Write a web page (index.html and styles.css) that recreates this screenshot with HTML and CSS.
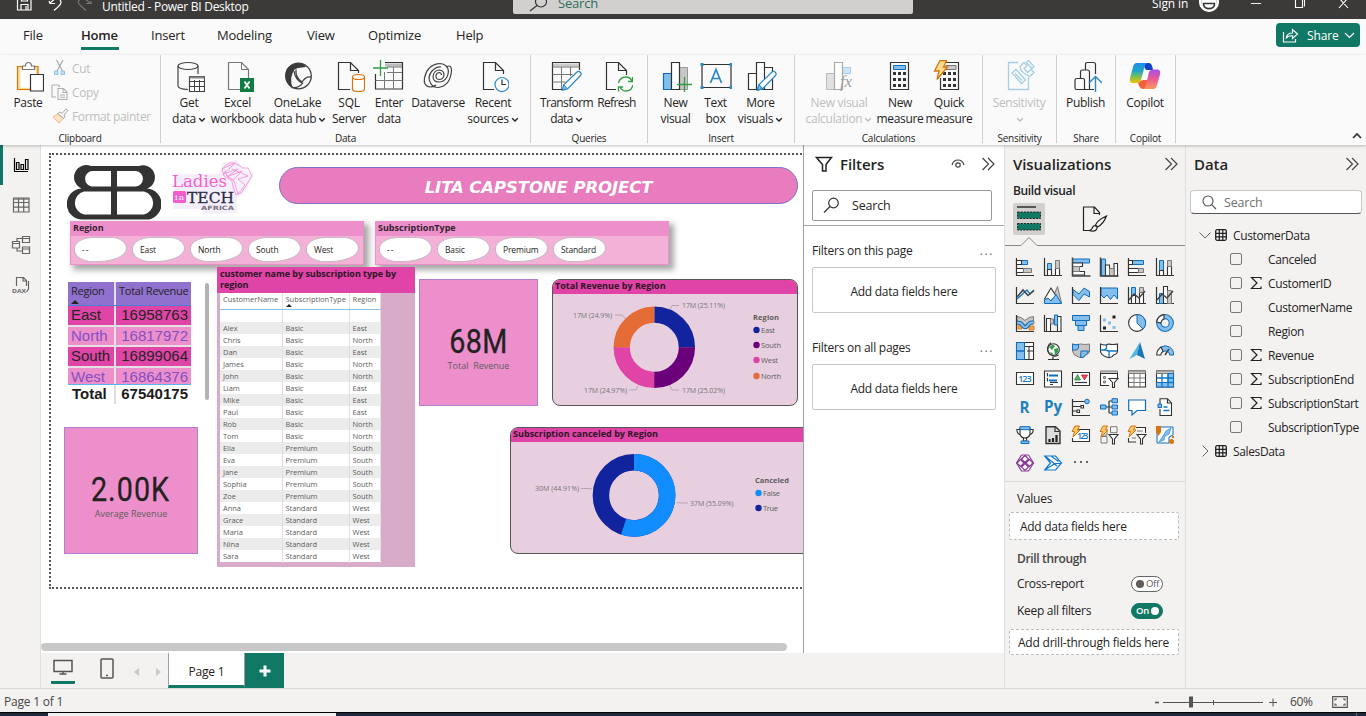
FILE: index.html
```html
<!DOCTYPE html>
<html lang="en">
<head>
<meta charset="utf-8">
<title>Untitled - Power BI Desktop</title>
<link rel="stylesheet" href="styles.css">
</head>
<body>
<svg class="defs" width="0" height="0">
  <defs>
    <linearGradient id="cpA" x1="0" y1="0" x2="0" y2="1"><stop offset="0" stop-color="#1c8fe8"/><stop offset=".4" stop-color="#1fa6c9"/><stop offset=".7" stop-color="#7fbf4d"/><stop offset="1" stop-color="#f5c400"/></linearGradient>
    <linearGradient id="cpB" x1="0" y1="0" x2="0" y2="1"><stop offset="0" stop-color="#a450e8"/><stop offset=".5" stop-color="#ec5a90"/><stop offset="1" stop-color="#fb9a5a"/></linearGradient>
    <symbol id="chev" viewBox="0 0 8 6"><path d="M1.2 1.2 4 4 6.8 1.2" fill="none" stroke="currentColor" stroke-width="1.4"/></symbol>
    <symbol id="dbl" viewBox="0 0 14 14"><path d="M1.5 1 7.5 7l-6 6M7 1l6 6-6 6" fill="none" stroke="#444" stroke-width="1.2"/></symbol>
    <symbol id="tbl" viewBox="0 0 12 12"><rect x=".7" y=".7" width="10.6" height="10.6" rx="1.5" fill="none" stroke="#222" stroke-width="1.3"/><path d="M4.3 1v10M7.8 1v10M1 4.3h10M1 7.8h10" stroke="#222" stroke-width="1.2"/></symbol>
    <symbol id="sig" viewBox="0 0 12 14"><path d="M11 3.5V1.5H1.5L7 7l-5.5 5.5H11v-2" fill="none" stroke="#222" stroke-width="1.2"/></symbol>
    <symbol id="pen" viewBox="0 0 22 22"><path d="M1.5 20.5 3 15 16.5 1.8a2.6 2.6 0 0 1 3.7 3.7L7 19z" fill="#fff" stroke="#2b88c8" stroke-width="1.3"/><path d="M1.5 20.5 3 15l4 4z" fill="#83beec" stroke="#2b88c8"/></symbol>
  </defs>
</svg>

<header class="titlebar">
  <svg class="tb-left" width="102" height="19" viewBox="0 0 102 19" fill="none" stroke="#fff" stroke-width="1.2"><path d="M17.500-2V10h13.500V-2M21 10V4.500h7V10M21.500-2V1h6v-3M26 6v4"/><path d="M49 1l1 2.500h5M50 3l6-5M58-2q6 4 0 9l-4 3.500"/><path d="M91 1v2.500h-5M90 3l-6-5M82-2q-7 4-1 8l5 4.500" stroke="#777"/></svg>
  <span class="tb-title">Untitled - Power BI Desktop</span>
  <div class="tb-search"><svg width="22" height="14" viewBox="0 0 22 14" fill="none" stroke="#333" stroke-width="1.2"><circle cx="14" cy="1.500" r="5.500"/><path d="M10 5.500 3 11"/></svg><span>Search</span></div>
  <span class="tb-sign">Sign in</span>
  <svg class="tb-right" width="172" height="19" viewBox="0 0 172 19" fill="none" stroke="#fff" stroke-width="1.100"><circle cx="15" cy="2" r="9.500" fill="#fff"/><circle cx="15" cy="2" r="7.500" fill="#3b3a39" stroke="none"/><circle cx="15" cy="2" r="7" fill="#fff"/><path d="M9.500 3.500q0 5 5.500 5t5.500-5z" stroke="#333" stroke-width="1.500"/><path d="M57 3.500h10M101.500-1V7.500h7V-1zM104-1.500h6.500V6.500M145-2l9 10M154-2l-9 10"/></svg>
</header>

<nav class="tabs">
  <span>File</span><span class="on"><b>Home</b></span><span>Insert</span><span>Modeling</span><span>View</span><span>Optimize</span><span>Help</span>
  <div class="share"><svg width="17" height="15" viewBox="0 0 17 15" fill="none" stroke="#fff" stroke-width="1.200"><path d="M1.500 4v10h12v-3"/><path d="M4 10.500Q5 5 10.500 5V1.500L15.500 6l-5 4.500V7.800Q6 7.500 4 10.500z"/></svg><span>Share</span><svg width="11" height="7" viewBox="0 0 11 7" fill="none" stroke="#fff" stroke-width="1.200"><path d="M1 1l4.500 4.500L10 1"/></svg></div>
</nav>

<section class="ribbon">
  <div class="group g-clip">
    <div class="cells">
      <div class="cell w-paste"><svg width="32" height="32" viewBox="0 0 32 32" fill="none"><path d="M7 8h18v21H7z" fill="#fff" stroke="#f8dc94" stroke-width="2.500"/><path d="M19 29.500H5.500v-23H26V14" stroke="#d9730d" stroke-width="1.200"/><path d="M10.500 9.500V6h3q0-3.500 3-3.500t3 3.500h3v3.500z" fill="#fff" stroke="#777" stroke-width="1.200"/><path d="M18.500 14.500h13v16.500h-13z" fill="#fff" stroke="#333" stroke-width="1.200"/></svg><p>Paste</p></div>
      <ul class="clip">
        <li><svg width="18" height="18" viewBox="0 0 18 18" fill="none"><path d="M5.500 1l6 11M12 1 6 12" stroke="#aaa" stroke-width="1.200"/><path d="M3.500 12h3.500v3.500H3.500zM10 12h3.500v3.500H10z" fill="#c7e0f4" stroke="#8fc3e8"/></svg>Cut</li>
        <li><svg width="18" height="18" viewBox="0 0 18 18" fill="none" stroke="#b0b0b0" stroke-width="1.100"><path d="M5 14H1V2h6l2 2M7 5.500h5.500L16 9v7.500H7zM12 6v3.500h4M9 12h5M9 14.300h5"/></svg>Copy</li>
        <li><svg width="18" height="18" viewBox="0 0 18 18" fill="none"><path d="M2 10l5-3.500 5 5L8 16z" fill="#fde3c4" stroke="#e9b98b"/><path d="M7 6.500l2-1.500 2 1.500 4-4.500 1.800 1.500-3.800 4.500 1 2-2 1.500z" stroke="#aaa"/></svg>Format painter</li>
      </ul>
    </div>
    <h6>Clipboard</h6>
  </div>

  <div class="group g-data">
    <div class="cells">
      <div class="cell w42"><svg width="32" height="32" viewBox="0 0 32 32" fill="none" stroke="#444" stroke-width="1.200"><ellipse cx="15" cy="6" rx="10" ry="3.500"/><path d="M5 6v20q0 3 10 3.500M25 6v8"/><path d="M16.500 16.500h15v15h-15z" fill="#fff"/><path d="M16.500 17.500h15" stroke="#888" stroke-width="2"/><path d="M16.500 21.500h15M16.500 26.500h15M21.500 20v11M26.500 20v11" stroke-width="1"/></svg><p>Get<br>data<svg class="cv"><use href="#chev"/></svg></p></div>
      <div class="cell w55"><svg width="32" height="32" viewBox="0 0 32 32" fill="none"><path d="M18 29.500H6.500v-27h13l7 7V18" stroke="#777" stroke-width="1.200"/><path d="M19.500 2.500v7h7" stroke="#777"/><path d="M18 18h14v14H18z" fill="#107c41"/><path d="M22.500 21.500l5 7M27.500 21.500l-5 7" stroke="#fff" stroke-width="1.800"/></svg><p>Excel<br>workbook</p></div>
      <div class="cell w65"><svg width="32" height="32" viewBox="0 0 32 32" fill="none"><circle cx="16.500" cy="16" r="12.800" stroke="#444" stroke-width="1.300"/><path d="M16 3Q3 5 3.500 16q.5 8 7 12Q7 17 12.500 9.500L16 8l8-1q-2-4-8-4z" fill="#3b3b3b"/><path d="M12 11q1 9 9 12.500M14 9.500q-1 8 6 12.500 4-6 9-5M9.500 27.500q8 1 11.500-5" stroke="#444" stroke-width="1.300"/></svg><p>OneLake<br>data hub<svg class="cv"><use href="#chev"/></svg></p></div>
      <div class="cell w38"><svg width="32" height="32" viewBox="0 0 32 32" fill="none"><path d="M17 29.500H5.500v-27h12l8 8V13M17.500 2.500v8h8" stroke="#333" stroke-width="1.200"/><path d="M19.500 17v12q0 2.500 6 2.500t6-2.500V17" fill="#fff" stroke="#d9730d" stroke-width="1.200"/><ellipse cx="25.500" cy="17" rx="6" ry="2.500" fill="#fff" stroke="#d9730d" stroke-width="1.200"/></svg><p>SQL<br>Server</p></div>
      <div class="cell w42"><svg width="32" height="32" viewBox="0 0 32 32" fill="none"><path d="M12 3.500h18v3H12z" fill="#bbb"/><path d="M12 2.500h17.500v26.500h-27V14" stroke="#333" stroke-width="1.200"/><path d="M14 7h15M2.500 20.500h27M14 12.500h15M11.500 12v17M20.500 7v22" stroke="#777"/><path d="M7.500 0v16M0 8h15" stroke="#2f9e44" stroke-width="1.300"/></svg><p>Enter<br>data</p></div>
      <div class="cell w56"><svg width="32" height="32" viewBox="0 0 32 32" fill="none" stroke="#444" stroke-width="1.200"><path d="M8 27Q1 26 2.500 18 5 5 17 3.500q5 0 7.500 3 5-2 5 4-1 15-13 17-6 0-8-4.500"/><path d="M24.500 6.500Q28 10 25 17q-3 5-8 5-6 0-6-5.500Q12 10 17.500 10q4.500.5 4.500 5-.5 4.500-5 4.500-3.500-.5-3-4 .5-3 3.500-3 2 .5 2 2.500"/><path d="M8.500 23Q5 17 10 11q5-5 9-4M8 27q4 0 6-2"/></svg><p>Dataverse</p></div>
      <div class="cell w54"><svg width="32" height="32" viewBox="0 0 32 32" fill="none"><path d="M17 29.500H6.500v-27h12l8 8V14M18.500 2.500v8h8" stroke="#333" stroke-width="1.200"/><circle cx="25" cy="24.500" r="7" fill="#fff" stroke="#2b88c8" stroke-width="1.200"/><path d="M25 19.500v5h4" stroke="#333" stroke-width="1.200"/></svg><p>Recent<br>sources<svg class="cv"><use href="#chev"/></svg></p></div>
    </div>
    <h6>Data</h6>
  </div>

  <div class="group g-q">
    <div class="cells">
      <div class="cell w54"><svg width="32" height="32" viewBox="0 0 32 32" fill="none"><path d="M2 3.500h26v3H2z" fill="#ccc"/><path d="M28.500 10V2.500h-27v27h10" stroke="#333" stroke-width="1.200"/><path d="M1.500 7h27M1.500 14.500h20M1.500 22h13M10.500 7v22M19.500 7v9" stroke="#777"/><use href="#pen" x="10" y="10" width="21" height="22"/></svg><p class="tight">Transform<br>data<svg class="cv"><use href="#chev"/></svg></p></div>
      <div class="cell w46"><svg width="32" height="32" viewBox="0 0 32 32" fill="none"><path d="M15 29.500H5.500v-27h12l8 8V15M17.500 2.500v8h8" stroke="#333" stroke-width="1.200"/><path d="M17.500 23q1.500-6 7.500-6 4 0 6 4M31.500 17v4.500H27M32 25q-1.500 6-7 6-4 0-6-4M17.500 31.500V27H22" stroke="#2f9e44" stroke-width="1.300"/></svg><p class="tight">Refresh</p></div>
    </div>
    <h6>Queries</h6>
  </div>

  <div class="group g-ins">
    <div class="cells">
      <div class="cell w40"><svg width="32" height="32" viewBox="0 0 32 32" fill="none"><path d="M3.500 13.500h8v16h-8z" fill="#83beec" stroke="#0f6cbd" stroke-width="1.200"/><path d="M19.500 7.500h8v22h-8z" fill="#c8c6c4" stroke="#999"/><path d="M11.500 2.500h8v27h-8z" fill="#fff" stroke="#333" stroke-width="1.200"/><path d="M24.500 17v15M17 24.500h15" stroke="#2f9e44" stroke-width="1.300"/></svg><p>New<br>visual</p></div>
      <div class="cell w40"><svg width="32" height="32" viewBox="0 0 32 32" fill="none"><path d="M2 4.500h29v23H2z" stroke="#333" stroke-width="1.200"/><path d="M.5 3h3v3h-3zM29.500 3h3v3h-3zM.5 26h3v3h-3zM29.500 26h3v3h-3z" fill="#2b88c8"/><path d="M10.500 23l5.500-13.500L21.500 23M12.500 18.500h7" stroke="#2b88c8" stroke-width="1.700"/></svg><p>Text<br>box</p></div>
      <div class="cell w50"><svg width="32" height="32" viewBox="0 0 32 32" fill="none" stroke="#333" stroke-width="1.200"><path d="M3.500 13.500h8v16h-8zM19.500 7.500h8v22h-8zM11.500 2.500h8v27h-8z" fill="#fff"/><use href="#pen" x="11" y="10" width="21" height="22"/></svg><p>More<br>visuals<svg class="cv"><use href="#chev"/></svg></p></div>
    </div>
    <h6>Insert</h6>
  </div>

  <div class="group g-calc">
    <div class="cells">
      <div class="cell w72 off"><svg width="32" height="32" viewBox="0 0 32 32" fill="none"><path d="M3.500 13.500h8v16h-8z" fill="#e3e1df" stroke="#bbb"/><path d="M19.500 7.500h8v6h-8z" fill="#cfe4f7" stroke="#a9cdec"/><path d="M11.500 2.500h8v27h-8z" fill="#fff" stroke="#aaa" stroke-width="1.200"/><text x="17" y="27" class="fx">fx</text></svg><p>New visual<br>calculation<svg class="cv"><use href="#chev"/></svg></p></div>
      <div class="cell w50"><svg width="32" height="32" viewBox="0 0 32 32" fill="none"><path d="M6.500 2.500h18v27h-18z" stroke="#333" stroke-width="1.200"/><path d="M9.500 5.500h12v4h-12z" fill="#83beec" stroke="#0f6cbd"/><path d="M9 13.500h13M9 19.500h13M9 25.500h13" stroke="#333" stroke-width="3" stroke-dasharray="3 2"/></svg><p>New<br>measure</p></div>
      <div class="cell w48"><svg width="32" height="32" viewBox="0 0 32 32" fill="none"><path d="M12 2.500h13.500v27h-18V18" stroke="#333" stroke-width="1.200"/><path d="M13 5.500h10v4H13z" fill="#ccc" stroke="#777"/><path d="M10 13.500h13M10 19.500h13M10 25.500h13" stroke="#333" stroke-width="3" stroke-dasharray="3 2"/><path d="M7 .5h6.500L10.500 7h4L4 19.500l2-8.500H1.500z" fill="#fbdc8c" stroke="#d9730d" stroke-width="1.300"/></svg><p>Quick<br>measure</p></div>
    </div>
    <h6>Calculations</h6>
  </div>

  <div class="group g-sens">
    <div class="cells"><div class="cell w60 off"><svg width="32" height="32" viewBox="0 0 32 32" fill="none" stroke="#a6cfe6" stroke-width="1.300"><path d="M15 2.500H5.500v27h20V17"/><path d="M9 13l4-3.500 9.500 10.500-4 3.500zM12 13.500l7 7M17 6.500l4-4 3 3-3 3 3.500 4 3.500-3 3 3-4 4q-10-4-10-10zM23.500 2.500l2-2 5.500 6-2 2z"/></svg><p>Sensitivity<br><svg class="cv"><use href="#chev"/></svg></p></div></div>
    <h6>Sensitivity</h6>
  </div>
  <div class="group g-share">
    <div class="cells"><div class="cell w56"><svg width="32" height="32" viewBox="0 0 32 32" fill="none" stroke="#333" stroke-width="1.200"><path d="M7 18.500h6q1.500 0 1.500 1.500v9.500h-8q-1.500 0-1.500-1.500v-7.500q0-2 2-2zM10.500 18v-6q0-2 2-2h5q2 0 2 2v17.500h-5M15.500 10V4.500q0-2 2-2h6q2 0 2 2V14M24 29.500h-5"/><path d="M25.500 32V17M19 23l6.500-6.500L32 23" stroke="#2b88c8" stroke-width="1.400"/></svg><p>Publish</p></div></div>
    <h6>Share</h6>
  </div>
  <div class="group g-cop">
    <div class="cells"><div class="cell w56"><svg width="32" height="32" viewBox="0 0 32 32"><path d="M9 22q1 7 5 7h6q4 0 5-5l2-4H14z" fill="#f2603c"/><path d="M13 3h7q3 0 4 7h-7z" fill="#173ec9"/><path d="M7.500 3H19q-2.500 0-3.500 4L12 20q-1 3-4 3H4q-4 0-3-5L4 7q1-4 3.500-4z" fill="url(#cpA)"/><path d="M24.500 29H13q3 0 4-4l3-13q1-2.500 4-2.500h4q4 0 3 5L28 25q-1 4-3.500 4z" fill="url(#cpB)"/></svg><p>Copilot</p></div></div>
    <h6>Copilot</h6>
  </div>
  <svg class="collapse" width="12" height="8" viewBox="0 0 12 8"><path d="M2 6l4-4 4 4" fill="none" stroke="#333" stroke-width="1.700"/></svg>
</section>

<main class="main">
  <aside class="rail">
    <div class="r-item on"><svg width="18" height="18" viewBox="0 0 18 18" fill="none" stroke="#000" stroke-width="1.200"><path d="M2.500 2v13.500H16"/><path d="M4.500 6.500h2.500v7H4.500zM9 8.500h2.500v5H9zM13.500 3.500H16v10h-2.500z"/></svg></div>
    <div class="r-item"><svg width="18" height="18" viewBox="0 0 18 18" fill="none" stroke="#666" stroke-width="1.200"><path d="M1.500 2h15.500v14H1.500zM1.500 6.500H17M1.500 11.200H17M6.500 2v14M11.700 2v14"/><path d="M1.500 3H17"/></svg></div>
    <div class="r-item"><svg width="20" height="20" viewBox="0 0 20 20" fill="none" stroke="#666" stroke-width="1.200"><path d="M11.500 1.500h7v6h-7zM11.500 12h7v6.500h-7zM1.500 6.500h7v6.500h-7zM1.500 8.500h7M11.500 3.500h7M11.500 14h7M6 6V3.500h5M6 13.500V16h5"/></svg></div>
    <div class="r-item"><svg width="20" height="20" viewBox="0 0 20 20" fill="none" stroke="#666" stroke-width="1.200"><path d="M5.500 11V2.500h7l3 3V11M12 2.500v3.500h3.500M17.500 6v8l-2 3"/><text x="1" y="18" class="dax" textLength="14" lengthAdjust="spacingAndGlyphs">DAX</text></svg></div>
  </aside>

  <div class="center">
    <div class="upper">
      <div class="canvas">
        <div class="page-outline"></div>
        <svg class="v-bb" width="94" height="58" viewBox="0 0 94 58"><path fill="#333" fill-rule="evenodd" d="M24 2H72a10.500 10.500 0 0 1 8 22.500A15.500 15.500 0 0 1 78 55.500H16A15.500 15.500 0 0 1 14.500 24.500 11 11 0 0 1 24 2zM25 7a7.800 7.800 0 0 0 0 15.500H44V7zM50 7V22.500H69a7.800 7.800 0 0 0 0-15.500zM17 27.500a11.800 11.800 0 0 0 0 23H44v-23zM50 27.500v23H77a11.800 11.800 0 0 0 0-23z"/></svg>
        <svg class="v-lita" width="86" height="56" viewBox="0 0 86 56"><path d="M4 14H48L52 2l14-2 7 10 10 4-8 16-9 8v15l-34 1v-5H2z" fill="#f5effc"/><g fill="none" stroke="#f58ad6" stroke-width=".8"><path d="M51 9l7-6 6 0 8 5 5 0 4 8-6 10-5 7-5 2-3-8-1-6-8-5zM51 9l13-6-6 6-6 5 15-5-11 8 15-6-9 9-6-4-2-5M61 9l16 7M55 15l8 6 4 13 7-9-7-6 10-3"/></g><text x="1" y="27" class="lad" textLength="55" lengthAdjust="spacingAndGlyphs">Ladies</text><rect x="2" y="31" width="13" height="12" rx="1.500" fill="#f45ccd"/><text x="4" y="40" class="inn" textLength="9">in</text><text x="16" y="43" class="tech" textLength="47" lengthAdjust="spacingAndGlyphs">TECH</text><text x="30" y="50" class="afr" textLength="33" lengthAdjust="spacingAndGlyphs">AFRICA</text></svg>
        <div class="v-banner">LITA CAPSTONE PROJECT</div>

        <div class="slicer s1"><h4>Region</h4><div class="pills"><span class="dd">--</span><span>East</span><span>North</span><span>South</span><span>West</span></div></div>
        <div class="slicer s2"><h4>SubscriptionType</h4><div class="pills"><span class="dd">--</span><span>Basic</span><span>Premium</span><span>Standard</span></div></div>

        <div class="v-rev">
          <div class="rr head"><span>Region<i></i></span><span>Total Revenue</span></div>
          <div class="rr dk"><span>East</span><span>16958763</span></div>
          <div class="rr lt"><span>North</span><span>16817972</span></div>
          <div class="rr dk"><span>South</span><span>16899064</span></div>
          <div class="rr lt last"><span>West</span><span>16864376</span></div>
          <div class="rr tot"><span>Total</span><span>67540175</span></div>
        </div>
        <div class="v-revscroll"></div>

        <div class="v-cust">
          <h4>customer name by subscription type by region</h4>
          <div class="ct">
            <div class="cr ch"><span>CustomerName</span><span>SubscriptionType<i></i></span><span>Region</span></div>
            <div class="cr blank"><span></span><span></span><span></span></div>
            <div class="cr"><span>Alex</span><span>Basic</span><span>East</span></div>
            <div class="cr"><span>Chris</span><span>Basic</span><span>North</span></div>
            <div class="cr"><span>Dan</span><span>Basic</span><span>East</span></div>
            <div class="cr"><span>James</span><span>Basic</span><span>North</span></div>
            <div class="cr"><span>John</span><span>Basic</span><span>North</span></div>
            <div class="cr"><span>Liam</span><span>Basic</span><span>East</span></div>
            <div class="cr"><span>Mike</span><span>Basic</span><span>East</span></div>
            <div class="cr"><span>Paul</span><span>Basic</span><span>East</span></div>
            <div class="cr"><span>Rob</span><span>Basic</span><span>North</span></div>
            <div class="cr"><span>Tom</span><span>Basic</span><span>North</span></div>
            <div class="cr"><span>Ella</span><span>Premium</span><span>South</span></div>
            <div class="cr"><span>Eva</span><span>Premium</span><span>South</span></div>
            <div class="cr"><span>Jane</span><span>Premium</span><span>South</span></div>
            <div class="cr"><span>Sophia</span><span>Premium</span><span>South</span></div>
            <div class="cr"><span>Zoe</span><span>Premium</span><span>South</span></div>
            <div class="cr"><span>Anna</span><span>Standard</span><span>West</span></div>
            <div class="cr"><span>Grace</span><span>Standard</span><span>West</span></div>
            <div class="cr"><span>Maria</span><span>Standard</span><span>West</span></div>
            <div class="cr"><span>Nina</span><span>Standard</span><span>West</span></div>
            <div class="cr"><span>Sara</span><span>Standard</span><span>West</span></div>
          </div>
        </div>

        <div class="card c-total"><b>68M</b><span>Total&nbsp; Revenue</span></div>
        <div class="card c-avg"><b>2.00K</b><span>Average Revenue</span></div>

        <div class="chart ch1">
          <h4>Total Revenue by Region</h4>
          <svg width="244" height="112" viewBox="553 294 244 112">
            <g fill="none" stroke-width="16.300">
              <path d="M654.300 314.700A32.600 32.600 0 0 1 686.900 347.500" stroke="#12239e"/>
              <path d="M686.900 347.300A32.600 32.600 0 0 1 654 379.900" stroke="#6b007b"/>
              <path d="M654.300 379.900A32.600 32.600 0 0 1 621.700 347.100" stroke="#e044a7"/>
              <path d="M621.700 347.300A32.600 32.600 0 0 1 654.300 314.700" stroke="#e66c37"/>
              <g stroke="#b9a3b2" stroke-width="1"><path d="M670 309l2-3.500h7M615 315h7l4 4M629 390l3 0h4l2-4M670 386l2 4h7"/></g>
            </g>
            <g class="lbl"><text x="682" y="308" textLength="43">17M (25.11%)</text><text x="573" y="318" textLength="39">17M (24.9%)</text><text x="584" y="393" textLength="43">17M (24.97%)</text><text x="682" y="393" textLength="43">17M (25.02%)</text></g>
            <g class="leg"><text x="753" y="320" class="lb" textLength="26">Region</text><text x="761" y="333" textLength="14">East</text><text x="761" y="348" textLength="20">South</text><text x="761" y="363" textLength="17">West</text><text x="761" y="379" textLength="20">North</text></g>
            <circle cx="756.500" cy="330" r="3.200" fill="#12239e"/><circle cx="756.500" cy="345" r="3.200" fill="#6b007b"/><circle cx="756.500" cy="360" r="3.200" fill="#e044a7"/><circle cx="756.500" cy="376" r="3.200" fill="#e66c37"/>
          </svg>
        </div>

        <div class="chart ch2">
          <h4>Subscription canceled by Region</h4>
          <svg width="310" height="112" viewBox="511 442 310 112">
            <g fill="none" stroke-width="16.500">
              <circle cx="634" cy="495.300" r="33.100" stroke="#12239e"/>
              <path d="M634 462.200A33.100 33.100 0 1 1 623.600 526.700" stroke="#118dff"/>
              <path d="M581 488.500h8l3 .5M677 502.500l4 .5h7" stroke="#b9a3b2" stroke-width="1"/>
            </g>
            <g class="lbl"><text x="535" y="491" textLength="44">30M (44.91%)</text><text x="690" y="506" textLength="43.500">37M (55.09%)</text></g>
            <g class="leg"><text x="755" y="483" class="lb" textLength="34">Canceled</text><text x="763" y="496" textLength="17">False</text><text x="763" y="511" textLength="15">True</text></g>
            <circle cx="758.500" cy="493" r="3.200" fill="#118dff"/><circle cx="758.500" cy="508" r="3.200" fill="#12239e"/>
          </svg>
        </div>
        <div class="hscroll"></div>
      </div>

      <aside class="filters">
        <div class="f-top">
          <div class="p-head"><svg width="18" height="17" viewBox="0 0 18 17" fill="none" stroke="#222" stroke-width="1.500"><path d="M1.500 1.500h15L11 8.500V15H7.500V8.500z"/></svg><h2>Filters</h2><svg class="eye" width="14" height="10" viewBox="0 0 14 10" fill="none" stroke="#444" stroke-width="1.200"><path d="M1 6Q2.500 1 7 1t6 5"/><circle cx="7" cy="6" r="2.200"/></svg><svg width="14" height="14"><use href="#dbl"/></svg></div>
          <div class="f-search"><svg width="17" height="17" viewBox="0 0 17 17" fill="none" stroke="#333" stroke-width="1.200"><circle cx="10.500" cy="6" r="4.800"/><path d="M7 9.500 1 15.500"/></svg><span>Search</span></div>
        </div>
        <div class="f-sec"><div class="f-lab"><span>Filters on this page</span><em>...</em></div><div class="f-box">Add data fields here</div></div>
        <div class="f-sec"><div class="f-lab"><span>Filters on all pages</span><em>...</em></div><div class="f-box">Add data fields here</div></div>
      </aside>
    </div>

    <div class="pagebar">
      <div class="pb-icons">
        <div class="pb-desk"><svg width="21" height="17" viewBox="0 0 21 17" fill="none" stroke="#555" stroke-width="1.500"><path d="M1 1.500h18v11H1zM10 13v2M6.500 15h7"/></svg></div>
        <svg width="14" height="21" viewBox="0 0 14 21" fill="none" stroke="#555" stroke-width="1.500"><rect x="1" y="1" width="12" height="19" rx="1"/><path d="M6 17.500h2"/></svg>
        <svg class="ar" width="5" height="8" viewBox="0 0 5 8"><path d="M5 0v8L0 4z" fill="#c8c8c8"/></svg>
        <svg class="ar" width="5" height="8" viewBox="0 0 5 8"><path d="M0 0v8l5-4z" fill="#c8c8c8"/></svg>
      </div>
      <div class="pb-page">Page 1</div>
      <div class="pb-add"><svg width="12" height="12" viewBox="0 0 12 12"><path d="M6 .5v11M.5 6h11" stroke="#fff" stroke-width="3"/></svg></div>
    </div>
  </div>

  <aside class="viz">
    <div class="p-head"><h2>Visualizations</h2><svg width="14" height="14"><use href="#dbl"/></svg></div>
    <h3>Build visual</h3>
    <div class="modes">
      <div class="mode on"><svg width="26" height="26" viewBox="0 0 26 26"><path d="M1 1h19" stroke="#222" stroke-width="1.400"/><g fill="#117865" stroke="#222" stroke-dasharray="2 1.200"><path d="M1.500 6h23v6.500h-23zM1.500 17.500h23V24h-23z"/></g></svg></div>
      <svg width="26" height="26" viewBox="0 0 26 26" fill="none" stroke="#222" stroke-width="1.200"><path d="M7 24.500H1.500V1h11l5 5.500V9M12 1v6.500h5.500"/><path d="M24.500 10q-9 4-11 9l2 2q6-3 9-11zM13 19.500q-2 0-3 3-1 2-3 2 5 1.500 7-.5 1.500-1.500 1-3z"/></svg>
    </div>
    <svg class="notch" width="180" height="9" viewBox="0 0 180 9"><path d="M0 8.500H16l8-8 8 8H180" fill="none" stroke="#8a8886"/></svg>
    <div class="vgrid">
      <svg viewBox="0 0 18 18"><path class="k" d="M.5 0v17.500H18"/><path class="b" d="M5.500 2.500h6v4h-6z"/><path class="w" d="M.5 2.500h5v4h-5zM.5 10.500h7v4h-7z"/><path class="g" d="M7.500 10.500h8v4h-8z"/></svg>
      <svg viewBox="0 0 18 18"><path class="k" d="M.5 0v17.500H18"/><path class="b" d="M3.500 5.500h4v6h-4z"/><path class="w" d="M3.500 11.500h4v6h-4zM11.500 10.500h4v7h-4z"/><path class="g" d="M11.500 2.500h4v8h-4z"/></svg>
      <svg viewBox="0 0 18 18"><path class="b" d="M.5 1h17v4H.5z"/><path class="w" d="M.5 5h10v3.500H.5zM.5 13.500h12v3.500H.5z"/><path class="g" d="M.5 8.500h7v5h-7z"/><path class="k2" d="M.5-.5V18H18.500"/></svg>
      <svg viewBox="0 0 18 18"><path class="b" d="M1.500 1h4v17h-4z"/><path class="w" d="M5.500 7h4v11h-4zM14 5.500h3.500V18H14z"/><path class="g" d="M9.500 10.500H14V18H9.500z"/><path class="k2" d="M.5-.5V18H18.500"/></svg>
      <svg viewBox="0 0 18 18"><path class="k" d="M.5 0v17.500H18"/><path class="b" d="M4.500 2.500h11v4h-11z"/><path class="w" d="M.5 2.500h4v4h-4zM.5 10.500h10v4H.5z"/><path class="g" d="M10.500 10.500h5v4h-5z"/></svg>
      <svg viewBox="0 0 18 18"><path class="k" d="M.5 0v17.500H18"/><path class="b" d="M3.500 2.500h4v10h-4z"/><path class="w" d="M3.500 12.500h4v5h-4zM11.500 8.500h4v9h-4z"/><path class="g" d="M11.500 2.500h4v6h-4z"/></svg>

      <svg viewBox="0 0 18 18"><path class="k" d="M.5 1v16.500H18"/><path class="bl" d="M1 13l10-9 3 4 4-4"/><path class="k2" d="M1 11l6-7 5 5.500 6-5"/></svg>
      <svg viewBox="0 0 18 18"><path class="g" d="M10 9l3.500-8.500 4 16.500H12z"/><path class="w" d="M.5 13 7 2l5 8-5 5z"/><path class="b" d="M.5 17.500V14l3.500-2 3 3 5-6.500 5.500 9z"/></svg>
      <svg viewBox="0 0 18 18"><path class="b" d="M1 3.500l6 4.500L12 2l5.500 3.500V11L12 8l-5 6.500-6-6z"/><path class="k" d="M.5 1v16.500H18"/></svg>
      <svg viewBox="0 0 18 18"><path class="b" d="M1 2h16.500v11L14 9l-3.500 4.500L7 9l-3 3-3-3z"/><path class="k" d="M.5 1v16.500H18"/></svg>
      <svg viewBox="0 0 18 18"><path class="k" d="M.5 1v16.500H18"/><path class="b" d="M3.500 1.500h4v8h-4z"/><path class="w" d="M3.500 9.500h4v8h-4zM11.500 6.500h4v11h-4z"/><path class="g" d="M11.500 1.500h4v5h-4z"/><path class="k2" d="M1 14l5-6 5 4 6-7"/></svg>
      <svg viewBox="0 0 18 18"><path class="k" d="M.5 1v16.500H18"/><path class="b" d="M3.500 7.500h4v10h-4z"/><path class="w" d="M7.500.5h4v17h-4z"/><path class="g" d="M11.500 4.500h4v13h-4z"/><path class="k2" d="M1 14l5-6 5 4 6-7"/></svg>

      <svg viewBox="0 0 18 18"><path d="M2 9h4v6H2zM14 7h4v3h-4zM13 12h5v4h-5z" fill="#f3a04a" stroke="#d9730d" stroke-width=".8"/><path class="g" d="M1 2.500q4 0 8 4 4-4 8.500-4V7Q13 7.500 9 11 5 7.500 1 7z"/><path d="M1 9q4-1 6 3 2 2.500 4.500 0Q13 8 17.500 8.500" fill="none" stroke="#0f6cbd" stroke-width="4"/><path d="M1 9q4-1 6 3 2 2.500 4.500 0Q13 8 17.500 8.500" fill="none" stroke="#83beec" stroke-width="2"/><path class="k" d="M.5 1v16.500H18"/></svg>
      <svg viewBox="0 0 18 18"><path class="w" d="M2.500 4.500h4v13h-4zM13.500 2.500h3.500v15h-3.500z"/><path class="g" d="M6.500 5h3v5h-3z"/><path class="b" d="M10.500 1h3v10h-3z"/><path class="k" d="M.5 1v16.500H18"/></svg>
      <svg viewBox="0 0 18 18"><path class="b" d="M.5 1.500h17v5H.5zM3.500 6.500h11v5h-11zM6 11.500h6v5H6z"/></svg>
      <svg viewBox="0 0 18 18"><path class="k" d="M.5 1v16.500H18"/><path d="M12.500 1.500h3v3h-3zM3 12.500h3v3H3z" fill="#222"/><path d="M3 4.500h3v3H3zM8 7.500h3v3H8zM12.500 12h3v3h-3z" fill="#83beec"/></svg>
      <svg viewBox="0 0 18 18"><circle cx="9" cy="9" r="8.400" class="w"/><path class="b" d="M9 .6V9l6 6A8.400 8.400 0 0 0 9 .6z"/></svg>
      <svg viewBox="0 0 18 18"><circle cx="9" cy="9" r="6.300" fill="none" stroke="#0f6cbd" stroke-width="5.200"/><circle cx="9" cy="9" r="6.300" fill="none" stroke="#83beec" stroke-width="3.200"/><path class="w" d="M.6 8q1-6.500 7.400-7.400V5Q5.500 5.500 5 9z"/></svg>

      <svg viewBox="0 0 18 18"><path class="w" d="M.5.500h17v17H.5zM11 9h6.500M8.500 4.500h9M13 4.500v13"/><path class="b" d="M.5.500h8V9h-8zM.5 9h8v8.500h-8z"/></svg>
      <svg viewBox="0 0 18 18"><circle cx="9.500" cy="7.500" r="5.800" class="w"/><path d="M5 5l4-2.500L11 4 8 8zM10 7l4-1v4l-3 3zM6 10l3 1-1 2z" fill="#2f9e44"/><path class="k" d="M7 .7A7 7 0 1 0 14.500 13M9 15v2M4 17.500h11"/></svg>
      <svg viewBox="0 0 18 18"><path class="g" d="M.5 2q5 2 8 0 4 1 9 0v7q0 3-4 4-2 4-7 2-6-2-6-6z"/><path class="b" d="M.5 2q4 2 6 0v4L5 8H.5zM9 9h7.500q-1 3-3 4-2 3-5 2.500z"/></svg>
      <svg viewBox="0 0 18 18"><path class="w" d="M.5 2q5 2 8 0 4 1 9 0v7q0 3-4 4-2 4-7 2-6-2-6-6z"/><path class="bl" d="M6.500 2v4L5 8H.5M9 15.500V9h8M9 9 5 8"/></svg>
      <svg viewBox="0 0 18 18"><path d="M12 0 1.500 17 9 13z" fill="#4db6e2"/><path d="M12 0l5 17-8-4z" fill="#1a78b8"/></svg>
      <svg viewBox="0 0 18 18"><path class="b" d="M5 5a8.300 8.300 0 0 1 12.500 8h-4q0-4-4.500-4l-2 .5z"/><path class="w" d="M.7 13q0-5 4.300-8l2 4.500q-2 1-2.300 3.500z"/><path class="k2" d="M9 13l4-6"/></svg>

      <svg viewBox="0 0 18 18"><path class="w" d="M.5 2.500h17v12H.5z"/><text x="2.200" y="12" class="n123" textLength="13.500">123</text></svg>
      <svg viewBox="0 0 18 18"><path class="w" d="M.5 1h17v16H.5z"/><path class="k" d="M3.500 3v3.500M3.500 8v3.500M6 12.500h8M6 14.500h3"/><path d="M5 5.500h9M5 10.500h8" stroke="#0f6cbd" stroke-width="2"/></svg>
      <svg viewBox="0 0 18 18"><path class="w" d="M.5 2.500h17v13H.5z"/><path d="M2.500 10l3-5.500 3 5.500z" fill="#59b86c" stroke="#2f7d3b" stroke-width=".8"/><path d="M9.500 5h6l-3 5z" fill="#f45" stroke="#b01e2e" stroke-width=".8"/><path class="k" d="M3 12.500h12"/></svg>
      <svg viewBox="0 0 18 18"><path class="g" d="M.5 1h17v2.500H.5z"/><path class="w" d="M9 15.500H.5v-12h17V8"/><path class="g" d="M3.500 6.500h2v2h-2zM3.500 11h2v2h-2z"/><path class="w" d="M9 8.500h9L14.500 12.500V17.500h-2v-5z"/></svg>
      <svg viewBox="0 0 18 18"><path class="w" d="M.5 1h17v16H.5z"/><path class="g" d="M.5 1h17v2.500H.5z"/><path class="gl" d="M1 8h16M1 12.500h16M6 4v13M12 4v13"/></svg>
      <svg viewBox="0 0 18 18"><path class="w" d="M.5 1h17v16H.5z"/><path class="g" d="M.5 1h17v2.500H.5z"/><path class="b" d="M12 3.500h5.500V17H.5v-4.500H12z"/><path class="bl" d="M1 8h16M6 4v13M12 12.500h5M12 4v13" stroke-width=".8"/></svg>

      <svg viewBox="0 0 18 18"><text x="3.500" y="15" class="big" textLength="10" lengthAdjust="spacingAndGlyphs">R</text></svg>
      <svg viewBox="0 0 18 18"><text x="0" y="14" class="big" textLength="18" lengthAdjust="spacingAndGlyphs">Py</text></svg>
      <svg viewBox="0 0 18 18"><path class="k" d="M.5 1v16.500H18M1 3.500h12M1 8.500h8M1 13h4"/><circle cx="15" cy="3.500" r="2.300" class="b"/><path class="w" d="M9 7.500h2.500V10H9zM5 12h2.500v2.500H5z"/></svg>
      <svg viewBox="0 0 18 18"><path class="k" d="M6 9h3M9 3v12M9 3h3M9 9h3M9 15h3"/><path class="b" d="M.5 7h5.500v4H.5zM12 .7h5.500v4H12zM12 7h5.500v4H12zM12 13h5.500v4H12z"/></svg>
      <svg viewBox="0 0 18 18"><path d="M.7 2h16.800v10.500H9L4 17v-4.500H.7z" fill="#fff" stroke="#0f6cbd" stroke-width="1.200"/></svg>
      <svg viewBox="0 0 18 18"><path class="w" d="M4 6V.7h7.500L15.500 5v12.500H4V11"/><path class="k" d="M11.500 1v4h4"/><path class="b" d="M2 6h3.500v3.500H2z"/><path class="bl" d="M7.500 9h4M7.500 12.500h6"/></svg>

      <svg viewBox="0 0 18 18"><path class="w" d="M4 2h10v6q-1 4-5 4T4 8zM4 3.500H.8q0 4 3.700 5.500M14 3.500h3.200q0 4-3.700 5.500M7.500 12h3v3h-3z"/><path class="b" d="M4 .7h10v3H4zM5 15h8v2.500H5z"/></svg>
      <svg viewBox="0 0 18 18"><path d="M2 .7h9.500L16 5v12.500H2z" fill="#ddd" stroke="#333" stroke-width="1.400"/><path d="M11 1v4.500h4.500" class="k"/><path d="M5.500 16v-3M9 16v-4M12.500 16V9" stroke="#222" stroke-width="2.200"/></svg>
      <svg viewBox="0 0 18 18"><path class="w" d="M2 3.500h15.500v12H.5V12"/><text x="5" y="13" class="n123" textLength="11.500">123</text><path class="y" d="M3 0h4.500L5.500 4H8L1 11l1.500-5.500H0z"/></svg>
      <svg viewBox="0 0 18 18"><path class="gl" d="M10.500.7h6.500v6h-6.500zM1 10.500h6V17H1zM7 4v5H3"/><path class="w" d="M9 8.500h9L14.500 13v5h-2v-5z"/><path class="y" d="M3 0h4.500L5.500 4H8L1 11l1.500-5.500H0z"/></svg>
      <svg viewBox="0 0 18 18"><path class="w" d="M8 1.500h9.500V7M.5 12v4H8"/><path class="gl" d="M9 5h6M4 12h4"/><path class="w" d="M9 8.500h9L14.500 13v5h-2v-5z"/><path class="y" d="M3 0h4.500L5.500 4H8L1 11l1.500-5.500H0z"/></svg>
      <svg viewBox="0 0 18 18"><path d="M1 1h16v8l-4 2v6H1z" fill="#fff" stroke="#0f6cbd"/><path d="M10 5l5-3-2 6-4 2-1 4-5 2 4-6z" fill="#83beec" stroke="#3a8fd0" stroke-width=".8"/><path d="M0 0h5v6l-2.500 4L0 6z" fill="#d9730d"/><circle cx="15.500" cy="15.500" r="2.500" fill="#d9730d"/><path d="M16 10h2v2h-2z" fill="#d9730d"/></svg>

      <svg viewBox="0 0 18 18"><path d="M5.500 1h3L11 3.500M12.500 1h-3L3.500 7 .5 9l5 8h3M12.500 1 17.500 9l-5 8h-4M.5 9l5-8" fill="#fff" stroke="#8b3b98" stroke-width="1.200"/><path d="M9 1.500 12.500 5 9 8.500 5.500 5zM9 9.500l3.500 3.500L9 16.500 5.500 13zM4.500 5.500 8 9l-3.500 3.500L1 9zM13.500 5.500 17 9l-3.500 3.500L10 9z" fill="#fff" stroke="#8b3b98" stroke-width="1.200"/></svg>
      <svg viewBox="0 0 18 18"><path d="M.7 2h10.800L17.500 9l-6 7H.7L6.500 9zM1 2l12 10M7 2l7.500 5.500M.7 16 11 9.500h6M4 16l7.500 0" fill="#fff" stroke="#0f78d4" stroke-width="1.200"/></svg>
      <svg viewBox="0 0 18 18"><path d="M2 7h2v2H2zM8 7h2v2H8zM14 7h2v2h-2z" fill="#666"/></svg>
    </div>
    <div class="wells">
      <p>Values</p>
      <div class="well">Add data fields here</div>
      <p class="drill">Drill through</p>
      <div class="trow"><span>Cross-report</span><div class="tog"><i></i>Off</div></div>
      <div class="trow"><span>Keep all filters</span><div class="tog on">On<i></i></div></div>
      <div class="well w2">Add drill-through fields here</div>
    </div>
  </aside>

  <aside class="data">
    <div class="p-head"><h2>Data</h2><svg width="14" height="14"><use href="#dbl"/></svg></div>
    <div class="d-search"><svg width="15" height="15" viewBox="0 0 15 15" fill="none" stroke="#555" stroke-width="1.100"><circle cx="6" cy="6" r="5"/><path d="M9.700 9.700 14 14"/></svg><span>Search</span></div>
    <ul class="tree">
      <li class="t"><svg width="12" height="12" viewBox="0 0 12 12"><path d="M.5 3.500 6 9l5.500-5.500" fill="none" stroke="#666"/></svg><svg width="12" height="12"><use href="#tbl"/></svg><span>CustomerData</span></li>
      <li><i></i><s></s><span>Canceled</span></li>
      <li><i></i><svg width="12" height="14"><use href="#sig"/></svg><span>CustomerID</span></li>
      <li><i></i><s></s><span>CustomerName</span></li>
      <li><i></i><s></s><span>Region</span></li>
      <li><i></i><svg width="12" height="14"><use href="#sig"/></svg><span>Revenue</span></li>
      <li><i></i><svg width="12" height="14"><use href="#sig"/></svg><span>SubscriptionEnd</span></li>
      <li><i></i><svg width="12" height="14"><use href="#sig"/></svg><span>SubscriptionStart</span></li>
      <li><i></i><s></s><span>SubscriptionType</span></li>
      <li class="t"><svg width="12" height="12" viewBox="0 0 12 12"><path d="M3.500.500 9 6l-5.500 5.500" fill="none" stroke="#666"/></svg><svg width="12" height="12"><use href="#tbl"/></svg><span>SalesData</span></li>
    </ul>
  </aside>
</main>

<footer class="status">
  <span>Page 1 of 1</span>
  <svg width="122" height="14" viewBox="0 0 122 14" fill="none" stroke="#555"><path d="M0 7.500h4" stroke-width="1.600"/><path d="M8 7.500h100M58.500 5v5"/><path d="M34 1.500h4v11h-4z" fill="#555" stroke="none"/><path d="M114 7.500h8M118 3.500v8"/></svg>
  <em>60%</em>
  <svg class="fit" width="16" height="12" viewBox="0 0 16 12" fill="none" stroke="#555" stroke-width="1.200"><path d="M.7.700h14.600v10.600H.7zM3 4.500V3h2M11 3h2v1.500M3 7.500V9h2M11 9h2V7.500"/></svg>
</footer>
<div class="taskbar"><div></div><i></i></div>
</body>
</html>
```
FILE: styles.css
```css
* { box-sizing: border-box; }
body { margin: 0; width: 1366px; height: 716px; overflow: hidden; display: flex; flex-direction: column; font-family: "Open Sans", "Noto Sans", sans-serif; font-size: 12px; letter-spacing: -0.2px; color: #252423; background: #f3f2f1; }
h2, h3, h4, h6, p, ul { margin: 0; padding: 0; }
ul { list-style: none; }
em, i { font-style: normal; }
svg { display: block; flex: none; }
.defs { position: absolute; }

.titlebar { height: 19px; flex: none; background: #3b3a39; color: #fff; display: flex; overflow: hidden; }
.tb-title { width: 411px; line-height: 13px; white-space: nowrap; font-size: 12px; letter-spacing: -0.27px; }
.tb-search { width: 400px; height: 14px; background: #d2d0ce; border-radius: 0 0 2px 2px; display: flex; padding-left: 14px; gap: 9px; color: #2e6c60; line-height: 6px; font-size: 13px; }
.tb-sign { margin-left: 239px; width: 42px; line-height: 7px; white-space: nowrap; letter-spacing: -0.1px; }

.tabs { height: 36px; flex: none; background: #fafafa; padding-left: 23px; display: grid; grid-template-columns: 58px 70px 66px 90px 61px 88px 820px 84px; font-size: 13px; letter-spacing: -0.2px; line-height: 33px; }
.tabs b { display: inline-block; font-weight: 600; height: 31px; border-bottom: 3px solid #117865; letter-spacing: -0.2px; width: 38px; white-space: nowrap; }
.share { height: 24px; margin-top: 4px; background: #117865; border-radius: 4px; color: #fff; display: flex; align-items: center; line-height: 24px; gap: 8px; padding-left: 6px; font-size: 12px; letter-spacing: -0.1px; }
.share span { padding-top: 1px; }
.share svg:last-child { margin-left: -3px; }

.ribbon { height: 90px; flex: none; background: #fafafa; display: flex; box-shadow: 0 1px 3px rgba(0,0,0,.25); z-index: 2; position: relative; }
.group { height: 88px; border-right: 1px solid #d2d0ce; display: flex; flex-direction: column; align-items: center; }
.cells { display: flex; padding-top: 5px; height: 77px; flex: none; margin-left: -1px; }
.group h6 { font-size: 10px; font-weight: 400; line-height: 13px; letter-spacing: -0.25px; }
.cell { text-align: center; display: flex; flex-direction: column; align-items: center; white-space: nowrap; }
.cell p { line-height: 16px; margin-top: 3px; font-size: 12px; letter-spacing: -0.3px; }
.cell p.tight { letter-spacing: -0.6px; }
.cell.off p { color: #c0bebc; }
.cv { display: inline-block; width: 8px; height: 6px; margin-left: 2px; }
.g-clip { width: 161px; } .g-data { width: 370px; } .g-q { width: 117px; } .g-ins { width: 147px; }
.g-calc { width: 188px; } .g-sens { width: 74px; } .g-share { width: 59px; } .g-cop { width: 60px; }
.w-paste { width: 56px; } .w38 { width: 38px; } .w40 { width: 40px; } .w42 { width: 42px; } .w46 { width: 46px; } .w48 { width: 48px; } .w50 { width: 50px; } .w54 { width: 54px; } .w55 { width: 55px; } .w56 { width: 56px; } .w60 { width: 60px; } .w65 { width: 65px; } .w72 { width: 72px; }
.g-clip .cells { width: 160px; margin-left: 0; }
.g-data .cells { margin-left: -3px; }
.g-q .cells { margin-left: 1px; }
.w-paste { margin-right: -5px; }
.clip { color: #c0bebc; white-space: nowrap; margin-top: -3px; }
.clip li { display: flex; align-items: center; height: 24px; gap: 3px; letter-spacing: -0.35px; margin-top: -1px; margin-bottom: 1px; }
.fx { font: italic 17px "Liberation Serif", serif; fill: #a0a0a0; stroke: none; }
.collapse { margin-left: auto; align-self: flex-end; margin-right: 3px; margin-bottom: 5px; }

.main { height: 543px; flex: none; display: flex; }
.rail { width: 41px; border-right: 1px solid #e1dfdd; background: #f3f2f1; }
.r-item { height: 40px; display: flex; align-items: center; justify-content: center; border-left: 3px solid transparent; padding-right: 2px; }
.r-item.on { border-left-color: #117865; }
.dax { font: 700 6px "Open Sans", sans-serif; fill: #666; stroke: none; letter-spacing: 0; }
.center { width: 963px; display: flex; flex-direction: column; }
.upper { height: 508px; display: flex; }
.canvas { width: 762px; position: relative; overflow: hidden; background: #fff; }
.canvas > * { position: absolute; }
.page-outline { left: 8px; top: 8px; width: 800px; height: 436px; border: 2px dotted #555; }
.v-bb { left: 26px; top: 19px; }
.v-lita { left: 130px; top: 15px; }
.lad { font: 16px "DejaVu Serif", serif; fill: #f55ed0; letter-spacing: 0; }
.inn { font: 8px "DejaVu Serif", serif; fill: #fff; letter-spacing: 0; }
.tech { font: 15.500px "DejaVu Serif", serif; fill: #2c2c44; letter-spacing: 0; stroke: #2c2c44; stroke-width: .3; }
.afr { font: 700 6px "DejaVu Sans", sans-serif; fill: #77707c; letter-spacing: 0; }
.v-banner { left: 238px; top: 22px; width: 519px; height: 37px; border-radius: 19px; background: #e97bbf; border: 1px solid #7b74c8; color: #fff; font: italic 700 16.500px/39px "DejaVu Sans", sans-serif; text-align: center; letter-spacing: -0.1px; }
.slicer { top: 76px; width: 294px; height: 44px; background: #f3b1d8; border: 1px solid #ed8fca; box-shadow: 4px 4px 6px 1px rgba(0,0,0,.35); }
.slicer h4 { height: 14px; background: #ed8fca; font: 700 9px/12px "Open Sans", sans-serif; letter-spacing: 0; padding-left: 2px; color: #33232e; }
.s1 { left: 29px; } .s2 { left: 334px; }
.pills { display: flex; gap: 5px; padding: 1px 3px; }
.pills span { width: 53px; height: 25px; background: #fff; border: 1px solid #c8b8c2; border-radius: 20px 16px 30px 20px / 12px 12px 14px 12px; font-size: 8.500px; line-height: 23px; padding-left: 7px; letter-spacing: -0.15px; }
.pills .dd { letter-spacing: 1px; }

.v-rev { left: 27px; top: 137px; width: 123px; font-family: "Liberation Sans", sans-serif; font-size: 15px; letter-spacing: 0; }
.rr { display: grid; grid-template-columns: 46px 75px; gap: 2px; height: 20.600px; background: #e5e0e4; padding-bottom: 2px; line-height: 18px; }
.rr span { padding: 0 3px; }
.rr span + span { text-align: right; }
.rr.head { height: 24px; font: 11px/18px "Open Sans", sans-serif; border-bottom: 1px solid #4c7fd8; padding-bottom: 0; letter-spacing: -0.25px; }
.rr.head span { background: #9071ce; position: relative; white-space: nowrap; }
.rr.head i { position: absolute; left: 3px; bottom: 1px; border: 4px solid transparent; border-top: 0; border-bottom: 4px solid #222; }
.rr.dk span { background: #e044a7; }
.rr.lt span { background: #ed8fca; color: #8250c4; }
.rr.last { height: 17.500px; padding: 0; border-bottom: 1px solid #58b4f0; }
.rr.last span { line-height: 18px; overflow: hidden; }
.rr.tot { background: none; font-weight: 700; color: #1b1b1b; }
.rr.tot span:first-child { padding-left: 4px; }
.rr.tot span + span { box-shadow: -2px 0 #ddd; padding-left: 0; }
.v-revscroll { left: 164px; top: 138px; width: 4px; height: 117px; border-radius: 2px; background: #b3b3b3; }

.v-cust { left: 176px; top: 122px; width: 198px; height: 300px; background: #d8acc8; }
.v-cust h4 { height: 26px; background: #e044a7; font: 700 9px/11px "Open Sans", sans-serif; padding: 1px 3px; letter-spacing: -0.04px; color: #2e1526; }
.ct { width: 161px; margin-left: 3px; color: #605e5c; font-size: 7.500px; letter-spacing: -0.05px; }
.cr { display: grid; grid-template-columns: 62.500px 67px 31.500px; height: 12px; line-height: 13px; background: #fff; }
.cr:nth-child(odd) { background: #ececec; }
.cr span { padding-left: 3px; border-right: 1px solid #e6dde3; white-space: nowrap; }
.cr.ch { height: 17px; background: #fff; border-bottom: 1px solid #8fc0ea; line-height: 13px; }
.ch span { position: relative; letter-spacing: 0; }
.ch i { position: absolute; left: 3px; bottom: 2px; border: 3px solid transparent; border-top: 0; border-bottom: 3px solid #222; }

.card { background: #ed8fca; border: 1px solid #b27fd0; display: flex; flex-direction: column; align-items: center; }
.card b { font: 400 33px/36px Roboto, sans-serif; transform: scaleX(.87); color: #222; letter-spacing: .4px; -webkit-text-stroke: .3px #222; }
.card span { font-size: 9px; line-height: 13px; color: #605e5c; letter-spacing: 0; }
.c-total { left: 378px; top: 134px; width: 119px; height: 127px; padding-top: 44px; }
.c-total b + span { margin-top: -1px; }
.c-avg { left: 23px; top: 282px; width: 134px; height: 127px; padding-top: 44px; }
.c-avg b { letter-spacing: 1.200px; }
.c-avg b + span { margin-top: -1px; }

.chart { background: #e7cfdf; border: 1px solid #555; border-radius: 8px; overflow: hidden; }
.chart h4 { height: 14px; background: #e044a7; font: 700 9px/12px "Open Sans", sans-serif; padding-left: 2px; letter-spacing: .02px; color: #2e1526; }
.ch1 { left: 511px; top: 134px; width: 246px; height: 127px; }
.ch2 { left: 469px; top: 282px; width: 312px; height: 127px; }
.lbl { font-size: 7px; fill: #777; letter-spacing: 0; }
.leg { font-size: 7.500px; fill: #605e5c; letter-spacing: 0; }
.lb { font-weight: 700; }
.hscroll { left: 0; top: 498px; width: 746px; height: 8px; border-radius: 4px; background: #c8c8c8; }

.p-head { display: flex; align-items: center; height: 38px; }
.p-head h2 { font-size: 15px; font-weight: 600; letter-spacing: -0.08px; flex: 1; line-height: 38px; }
.filters { width: 201px; background: #fff; border-left: 1px solid #a0a0a0; font-size: 12px; }
.f-top { height: 81px; border-bottom: 1px solid #a8a4a2; padding: 0 8px; }
.filters .p-head { padding: 0 1px 0 3px; gap: 7px; }
.eye { margin-right: 9px; }
.f-search { margin-top: 7px; width: 180px; height: 31px; border: 1px solid #999; border-radius: 2px; display: flex; align-items: center; gap: 12px; padding-left: 10px; font-size: 12.500px; }
.f-sec { padding: 16px 8px 0; height: 97px; }
.f-lab { display: flex; justify-content: space-between; width: 183px; line-height: 18px; height: 18px; padding-right: 4px; letter-spacing: -0.25px; }
.f-lab em { letter-spacing: 1.600px; color: #666; margin-right: -3px; }
.f-box { margin-top: 7px; width: 184px; height: 46px; border: 1px solid #c8c6c4; border-radius: 2px; display: flex; align-items: center; justify-content: center; letter-spacing: -0.25px; padding-top: 2px; }

.pagebar { height: 35px; display: flex; background: #f3f2f1; }
.pb-icons { width: 127px; display: flex; align-items: center; padding-left: 10px; padding-bottom: 5px; }
.pb-desk { width: 24px; height: 26px; border-bottom: 3px solid #117865; display: flex; justify-content: center; margin-right: 25px; margin-top: 6px; padding-top: 1px; border-radius: 1px; }
.ar { margin-top: 8px; margin-left: 20px; } .ar + .ar { margin-left: 17px; }
.pb-page { width: 77px; background: #fff; border-left: 1px solid #a0a0a0; border-right: 1px solid #a0a0a0; border-bottom: 3px solid #117865; text-align: center; line-height: 38px; height: 35px; overflow: hidden; }
.pb-add { width: 39px; background: #117865; display: flex; align-items: center; justify-content: center; }

.viz { width: 182px; border-left: 1px solid #e1dfdd; border-right: 1px solid #e1dfdd; }
.viz .p-head { padding: 0 7px 0 8px; }
.viz h3 { font-size: 12px; font-weight: 600; line-height: 16px; padding-left: 8px; letter-spacing: -0.35px; }
.modes { display: flex; gap: 37px; padding: 0 8px; height: 39px; align-items: center; }
.mode { width: 32px; height: 32px; background: #d2d0ce; border-radius: 2px; display: flex; align-items: center; justify-content: center; }
.notch { width: 180px; margin-top: -1px; }
.vgrid { margin: 7px 0 0 6px; display: grid; grid-template-columns: repeat(6, 28px); grid-auto-rows: 28px; place-items: center; height: 228px; }
.vgrid svg { width: 18px; height: 18px; overflow: visible; }
.k { fill: none; stroke: #333; stroke-width: 1.200; }
.k2 { fill: none; stroke: #444; stroke-width: 1.500; }
.b { fill: #83beec; stroke: #0f6cbd; }
.bl { fill: none; stroke: #0f78c4; stroke-width: 1.300; }
.w { fill: #fff; stroke: #333; stroke-width: 1.100; }
.g { fill: #c8c6c4; stroke: #7a7a7a; }
.gl { fill: none; stroke: #7a7a7a; }
.y { fill: #fbc76a; stroke: #d9730d; }
.n123 { font: 600 9px "Open Sans", sans-serif; fill: #1a78c2; letter-spacing: 0; }
.big { font: 700 16px "Open Sans", sans-serif; fill: #2080bd; letter-spacing: 0; }
.wells { border-top: 1px solid #dcdad8; padding: 8px 4px 0; }
.wells p { padding-left: 8px; line-height: 18px; letter-spacing: -0.25px; }
.well { margin-top: 4px; width: 170px; height: 28px; background: #fff; border: 1px dashed #bdbbb9; line-height: 27px; padding-left: 10px; border-radius: 2px; white-space: nowrap; letter-spacing: -0.28px; }
.wells .drill { margin-top: 10px; font-weight: 600; color: #484644; letter-spacing: -0.35px; }
.trow { display: flex; justify-content: space-between; align-items: center; height: 27px; padding: 0 18px 0 8px; letter-spacing: -0.3px; margin-top: 1px; margin-bottom: -1px; }
.drill + .trow { margin-top: 2px; }
.drill + .trow + .trow { margin-top: 1px; }
.tog { width: 32px; height: 16px; border: 1px solid #666; border-radius: 8px; background: #fff; display: flex; align-items: center; font-size: 9.500px; line-height: 14px; gap: 2px; padding-left: 4px; color: #605e5c; }
.tog i { width: 8px; height: 8px; border-radius: 4px; background: #605e5c; }
.tog.on { background: #117865; border-color: #117865; color: #fff; font-weight: 600; }
.tog.on i { background: #fff; }
.well.w2 { height: 26px; margin-top: 6px; line-height: 25px; padding-left: 8px; letter-spacing: -0.22px; }

.data { width: 180px; }
.data .p-head { padding: 0 7px 0 8px; }
.d-search { margin: 7px 0 0 4px; width: 172px; height: 24px; background: #fff; border: 1px solid #c8c6c4; border-bottom: 1px solid #555; border-radius: 4px; display: flex; align-items: center; gap: 7px; padding-left: 11px; color: #707070; font-size: 12.500px; }
.tree { padding-top: 9px; }
.tree li { height: 24px; display: flex; align-items: center; padding-left: 44px; white-space: nowrap; letter-spacing: -0.36px; }
.tree i { width: 12px; height: 12px; border: 1px solid #777; border-radius: 2px; margin-right: 8px; }
.tree s, .tree li:not(.t) svg { width: 12px; margin-right: 6px; }
.tree .t { padding-left: 13px; gap: 4px; }
.tree .t span { margin-left: 2px; }

.status { height: 24px; flex: none; border-top: 1px solid #dcdad8; display: flex; align-items: center; padding: 2px 0 0 4px; color: #484644; }
.status svg:nth-of-type(1) { margin-left: auto; }
.status em { margin: 0 27px 0 13px; width: 23px; letter-spacing: -0.3px; }
.status em + .fit { margin-left: -8px; margin-right: 18px; }
.taskbar { height: 4px; background: #1b2a3f; border-top: 1px solid #000; display: flex; }
.taskbar div { margin-left: 48px; width: 288px; background: #efefef; }
.taskbar i { margin-left: auto; width: 1px; margin-right: 9px; background: #667; }
```
